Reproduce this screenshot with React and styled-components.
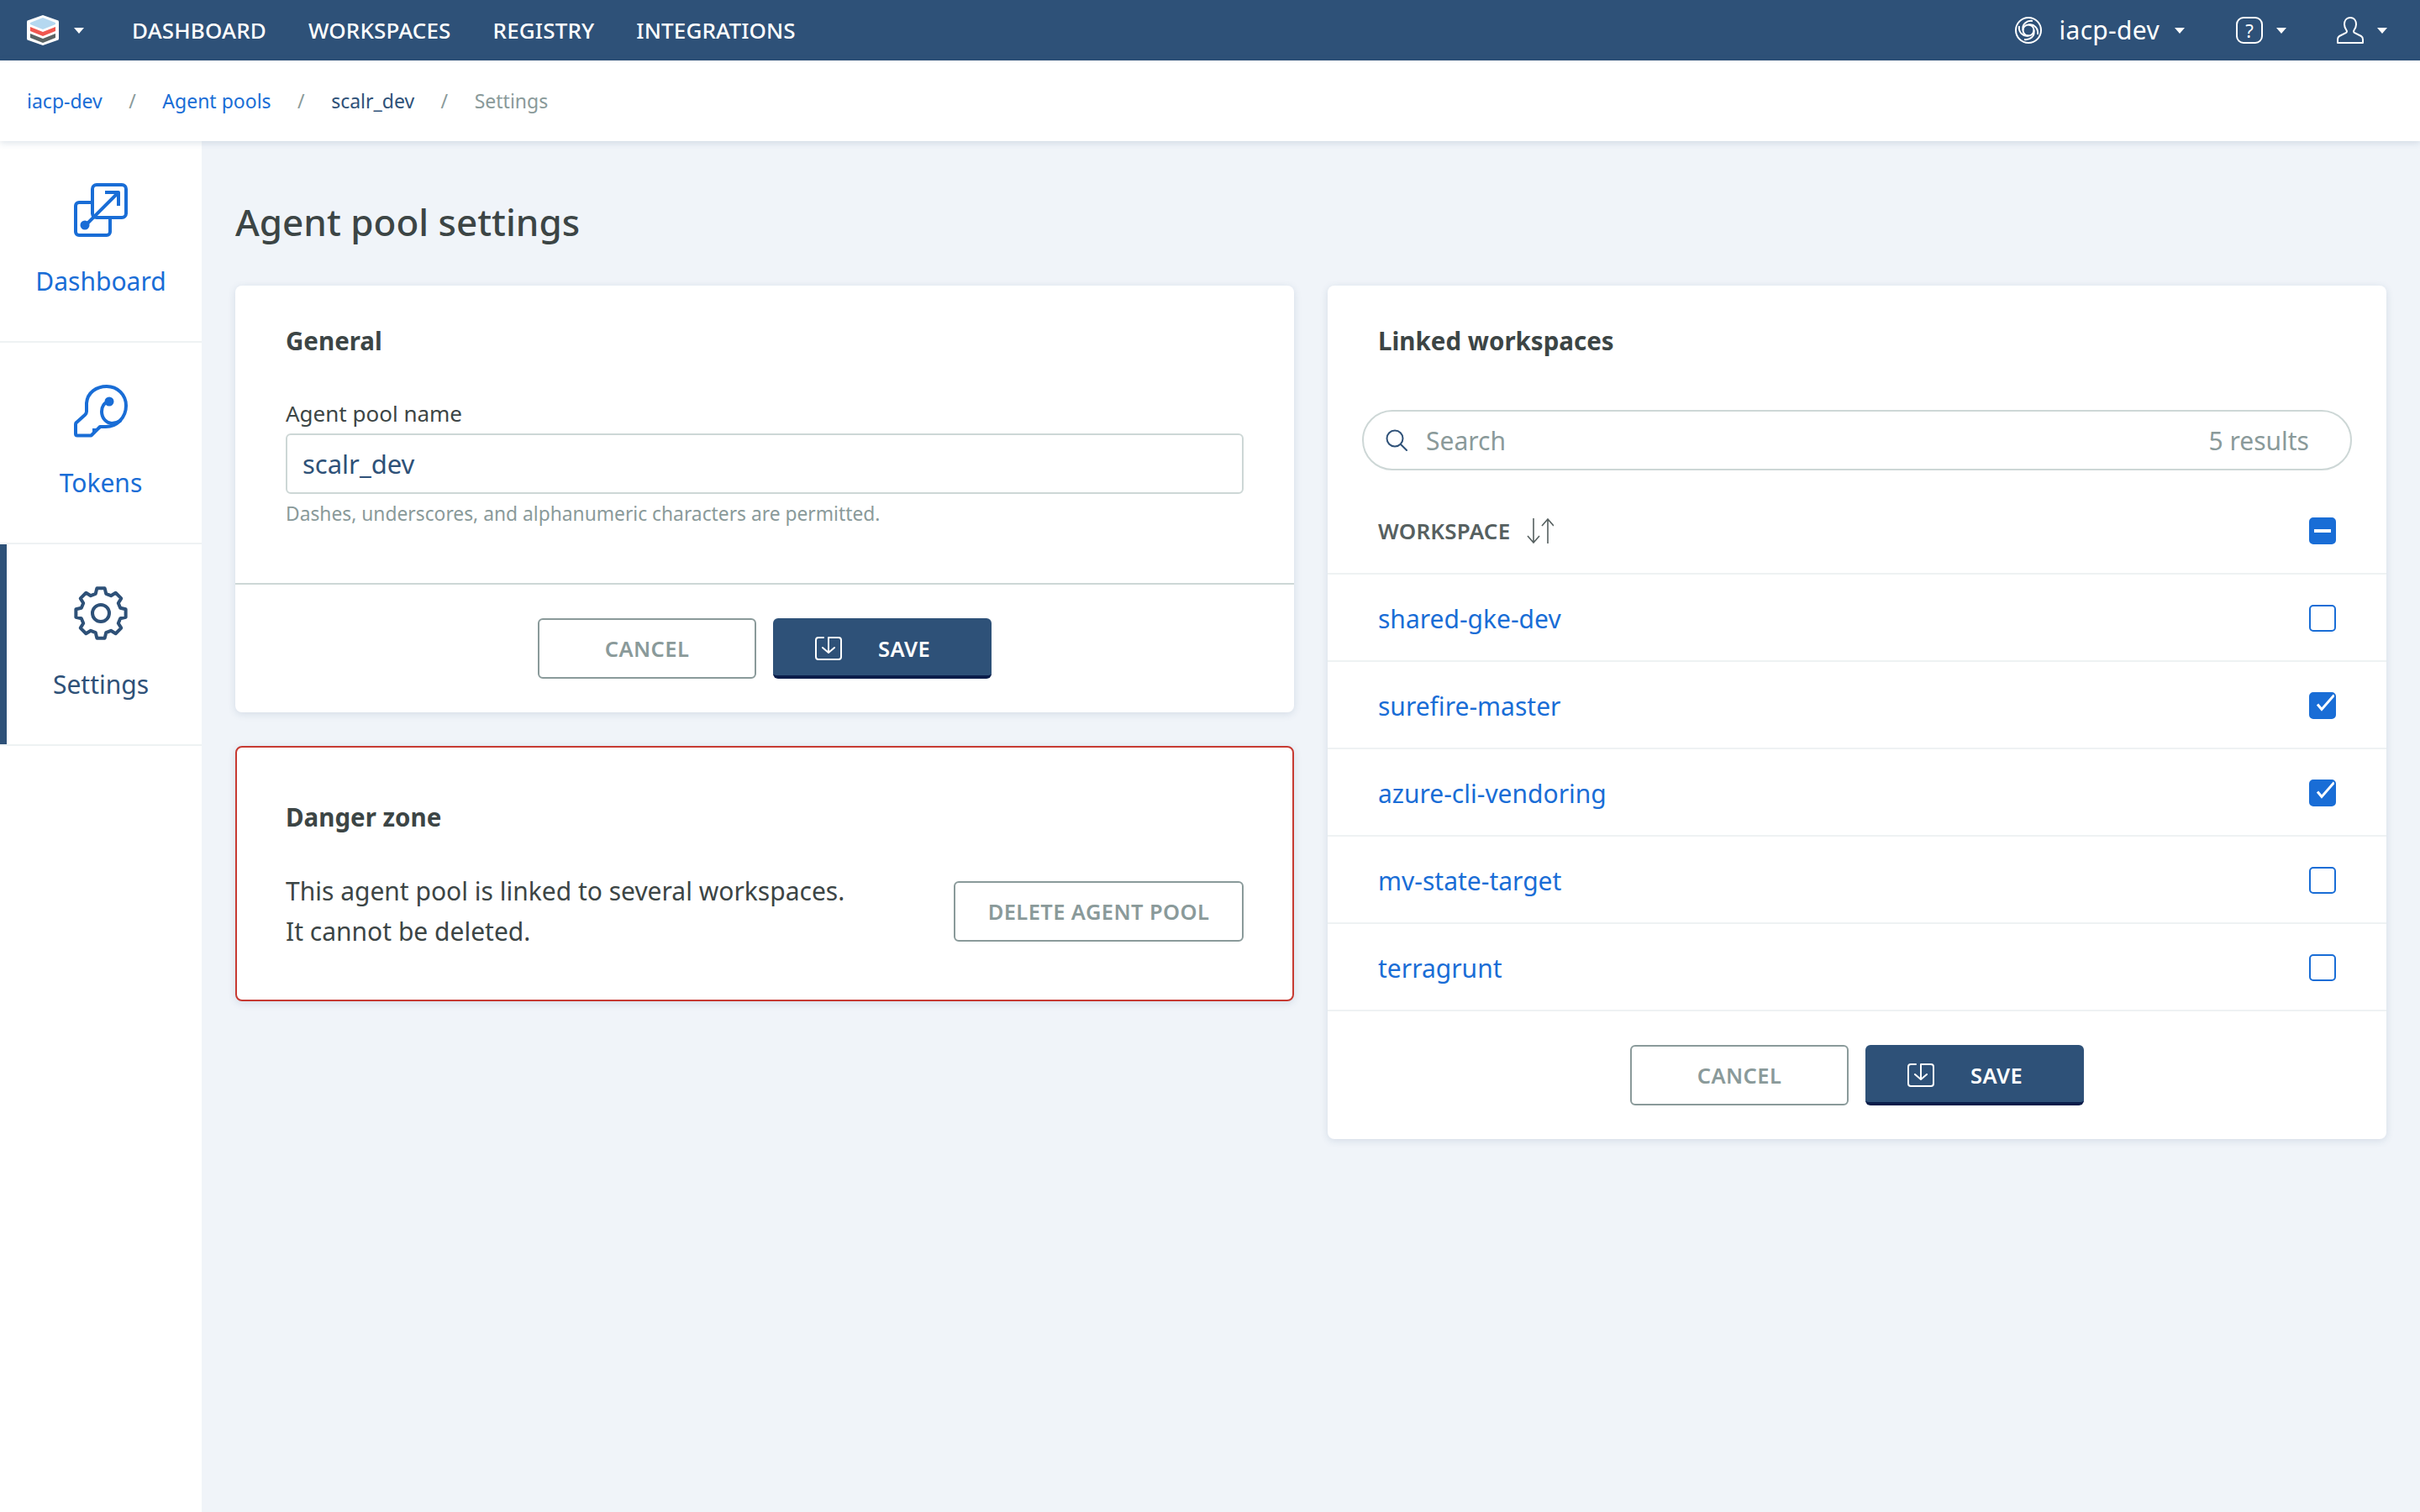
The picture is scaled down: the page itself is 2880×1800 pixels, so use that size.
import React from "react";
import styled, { createGlobalStyle } from "styled-components";

const navy = "#2e5178";
const blue = "#196dd6";
const fontStack = `"Noto Sans", "Open Sans", sans-serif`;

const GlobalStyle = createGlobalStyle`
    html, body {
        margin: 0;
        padding: 0;
        background: #f0f4f9;
    }
    * {
        box-sizing: border-box;
    }
`;

const Page = styled.div`
    width: 2880px;
    height: 1800px;
    overflow: hidden;
    display: flex;
    flex-direction: column;
    background: #f0f4f9;
    font-family: ${fontStack};
    color: #3c4545;
`;

const TopBar = styled.header`
    height: 72px;
    flex: none;
    display: flex;
    align-items: center;
    padding: 0 39px 0 32px;
    background: ${navy};
    color: #fff;
`;

const Caret = styled.span`
    display: inline-block;
    flex: none;
    width: 0;
    height: 0;
    margin-left: ${(props) => props.$gap || 18}px;
    border-left: 6px solid transparent;
    border-right: 6px solid transparent;
    border-top: 7px solid #fff;
`;

const Nav = styled.nav`
    display: flex;
    gap: 50px;
    margin-left: 57px;
`;

const NavLink = styled.a`
    font-size: 26px;
    font-weight: 500;
    letter-spacing: 0.15px;
    line-height: 72px;
`;

const TopRight = styled.div`
    margin-left: auto;
    display: flex;
    align-items: center;
`;

const OrgName = styled.span`
    margin-left: 21px;
    font-size: 30px;
    letter-spacing: 0.3px;
    line-height: 72px;
`;

const TopItem = styled.div`
    display: flex;
    align-items: center;
    margin-left: ${(props) => props.$gap || 0}px;
`;

const HelpBox = styled.span`
    width: 32px;
    height: 32px;
    border: 2px solid #fff;
    border-radius: 9px;
    display: flex;
    align-items: center;
    justify-content: center;
    font-size: 22px;
    line-height: 1;
`;

const Crumbs = styled.div`
    height: 96px;
    flex: none;
    display: flex;
    align-items: center;
    padding-left: 32px;
    background: #fff;
    box-shadow: 0 2px 8px rgba(46, 81, 120, 0.16);
    position: relative;
    z-index: 2;
    font-size: 23px;
`;

const Crumb = styled.span`
    color: ${(props) => props.$color};
`;

const CrumbSlash = styled.span`
    color: #8a9a9a;
    margin: 0 31.5px;
`;

const Body = styled.div`
    flex: 1;
    display: flex;
    min-height: 0;
`;

const Sidebar = styled.aside`
    width: 240px;
    flex: none;
    background: #fff;
`;

const SideItem = styled.a`
    height: 240px;
    display: flex;
    flex-direction: column;
    align-items: center;
    padding-top: 50px;
    border-bottom: 2px solid #eef2f3;
    color: ${(props) => (props.$active ? navy : blue)};
    box-shadow: ${(props) => (props.$active ? `inset 8px 0 0 ${navy}` : "none")};

    svg {
        width: 64px;
        height: 64px;
        display: block;
    }
`;

const SideLabel = styled.span`
    margin-top: 31px;
    font-size: 30px;
    line-height: 44px;
`;

const Main = styled.main`
    flex: 1;
    padding: 60px 40px 0;
`;

const Title = styled.h1`
    margin: 0 0 40px;
    font-size: 44px;
    font-weight: 500;
    line-height: 72px;
`;

const Columns = styled.div`
    display: grid;
    grid-template-columns: 1260px 1260px;
    gap: 40px;
    align-items: start;
`;

const Stack = styled.div`
    display: flex;
    flex-direction: column;
    gap: 40px;
`;

const Card = styled.section`
    background: #fff;
    border-radius: 8px;
    box-shadow: 0 2px 10px rgba(46, 81, 120, 0.14);
`;

const DangerCard = styled(Card)`
    border: 2px solid #c73a32;
    padding: 59px 58px 57px;
`;

const CardHead = styled.h2`
    margin: 0;
    font-size: 29.5px;
    font-weight: 700;
    line-height: 48px;
`;

const GeneralBody = styled.div`
    padding: 42px 60px 66px;
`;

const FieldLabel = styled.label`
    display: block;
    margin-top: 42px;
    margin-bottom: 4px;
    font-size: 26px;
    line-height: 40px;
`;

const FieldBox = styled.div`
    height: 72px;
    display: flex;
    align-items: center;
    padding: 0 18px;
    border: 2px solid #cdd7d6;
    border-radius: 6px;
    font-size: 31px;
    color: ${navy};
`;

const FieldHint = styled.p`
    margin: 8px 0 0;
    font-size: 22.8px;
    line-height: 32px;
    color: #8a9a9a;
`;

const Footer = styled.div`
    display: flex;
    justify-content: center;
    gap: 20px;
    padding: 40px 0;
    border-top: ${(props) => (props.$line ? "2px solid #cdd7d6" : "none")};
`;

const Button = styled.button`
    height: 72px;
    width: ${(props) => props.$width || 260}px;
    flex: none;
    display: flex;
    align-items: center;
    justify-content: center;
    padding: 0;
    background: #fff;
    border: 2px solid #8a9a9a;
    border-radius: 6px;
    font-family: ${fontStack};
    font-size: 25.5px;
    font-weight: 600;
    letter-spacing: 0.4px;
    color: #8a9a9a;
`;

const SaveButton = styled(Button)`
    justify-content: flex-start;
    padding: 4px 0 0 50px;
    background: ${navy};
    border: none;
    border-bottom: 4px solid #0a1d4a;
    color: #fff;

    svg {
        width: 32px;
        height: 28px;
        margin-right: 43px;
    }
`;

const DangerRow = styled.div`
    display: flex;
    align-items: center;
    justify-content: space-between;
    margin-top: 40px;
`;

const DangerText = styled.p`
    margin: 0;
    font-size: 30px;
    line-height: 48px;
`;

const LinkedHead = styled(CardHead)`
    padding: 42px 60px 0;
`;

const SearchBox = styled.div`
    height: 72px;
    margin: 58px 41px 0;
    display: flex;
    align-items: center;
    padding: 0 49px 0 26px;
    border: 2px solid #cdd7d6;
    border-radius: 36px;
    font-size: 30px;
    color: #8a9a9a;

    svg {
        width: 26px;
        height: 26px;
        margin-right: 22px;
    }
`;

const Results = styled.span`
    margin-left: auto;
`;

const Row = styled.div`
    height: 104px;
    display: flex;
    align-items: center;
    justify-content: space-between;
    padding: 2px 60px 0;
    border-bottom: 2px solid #eef2f3;
`;

const HeadRow = styled(Row)`
    height: 124px;
    padding-top: 22px;
`;

const HeadLabel = styled.span`
    display: flex;
    align-items: center;
    font-size: 26px;
    font-weight: 600;
    letter-spacing: 0.2px;
    color: #566060;

    svg {
        width: 32px;
        height: 30px;
        margin-left: 20px;
    }
`;

const WorkspaceLink = styled.a`
    font-size: 30px;
    color: ${blue};
`;

const Check = styled.span`
    width: 32px;
    height: 32px;
    flex: none;
    display: flex;
    align-items: center;
    justify-content: center;
    border-radius: 5px;
    border: 2px solid ${blue};
    background: ${(props) => (props.$on ? blue : "#fff")};
    overflow: hidden;

    svg {
        width: 32px;
        height: 32px;
        flex: none;
    }
`;

const Logo = () => (
    <svg width="38" height="36" viewBox="0 0 38 36">
        <path d="M19 0 36 6a2 2 0 0 1 2 2v20a2 2 0 0 1-2 2L19 36 2 30a2 2 0 0 1-2-2V8a2 2 0 0 1 2-2z" fill="#fff" />
        <path d="M19 3 34 9v2L19 17 4 11V9z" fill="#b5d8f0" />
        <path d="M4 14 19 20 34 14v5L19 25 4 19z" fill="#f0574f" />
        <path d="M4 22 19 28 34 22v5L19 33 4 27z" fill="#5a6464" />
    </svg>
);

const OrgIcon = () => (
    <svg width="32" height="32" viewBox="0 0 32 32" fill="none" stroke="#fff" strokeWidth="2">
        <circle cx="16" cy="16" r="15" />
        <circle cx="16" cy="16" r="6.5" />
        <path d="M9.5 16C8 9 14 4 21 5M16 9.5C23 8 28 14 27 21M22.5 16C24 23 18 28 11 27M16 22.5C9 24 4 18 5 11" />
    </svg>
);

const UserIcon = () => (
    <svg width="32" height="32" viewBox="0 0 32 32" fill="none" stroke="#fff" strokeWidth="2" strokeLinejoin="round">
        <path d="M16 1C11 1 9 5 9 9c0 3 1 5 2.500 7 .8 1.200.5 2.500-.8 3.200L3 23c-1.500.8-2 2-2 4v4h30v-4c0-2-.5-3.200-2-4l-7.700-3.800c-1.300-.7-1.600-2-.8-3.200C22 14 23 12 23 9c0-4-2-8-7-8z" />
    </svg>
);

const DashboardIcon = () => (
    <svg viewBox="0 0 64 64" fill="none" stroke="currentColor" strokeWidth="4" strokeLinejoin="round">
        <path d="M20 23H6a4 4 0 0 0-4 4v31a4 4 0 0 0 4 4h33a4 4 0 0 0 4-4V43" />
        <rect x="22" y="2" width="40" height="39" rx="5" />
        <path d="M14 50 51 13M37 11h16v16" />
        <circle cx="13" cy="50" r="5.500" fill="currentColor" stroke="none" />
    </svg>
);

const TokenIcon = () => (
    <svg viewBox="0 0 64 64" fill="none" stroke="currentColor" strokeWidth="4" strokeLinejoin="round" strokeLinecap="round">
        <path d="M15 22C16 9 27 2 39 2c13 0 23 10 23 23 0 14-11 25-24 25h-7L21 60a2 2 0 0 1-1 .5H4a2 2 0 0 1-2-2V47c0-1 .3-1.500 1-2l10-9c1-1 2-2 2-4z" />
        <path d="M42 20c-6 1-9 6-9 12 0 8 6 14 12 14 4 0 7-1 10-3" />
        <circle cx="42" cy="20" r="5.500" fill="currentColor" stroke="none" />
        <path d="M22 60V52h10L21 60z" fill="currentColor" stroke="none" />
    </svg>
);

// eight flat teeth round a circle
const gearPath = () => {
    const point = (radius, angle) => {
        const rad = (angle * Math.PI) / 180;
        return `${(32 + radius * Math.cos(rad)).toFixed(2)} ${(32 + radius * Math.sin(rad)).toFixed(2)}`;
    };
    let d = "";
    for (let i = 0; i < 8; i++) {
        const a = i * 45 - 90;
        d += `${i === 0 ? "M" : "L"}${point(24, a - 15)} L${point(30, a - 9)} L${point(30, a + 9)} L${point(24, a + 15)} `;
    }
    return d + "Z";
};

const GearIcon = () => (
    <svg viewBox="0 0 64 64" fill="none" stroke="currentColor" strokeWidth="4" strokeLinejoin="round">
        <path d={gearPath()} />
        <circle cx="32" cy="32" r="10" />
    </svg>
);

const SaveIcon = () => (
    <svg viewBox="0 0 32 28" fill="none" stroke="#fff" strokeWidth="2" strokeLinecap="round" strokeLinejoin="round">
        <path d="M10 1H4a3 3 0 0 0-3 3v20a3 3 0 0 0 3 3h24a3 3 0 0 0 3-3V4a3 3 0 0 0-3-3H16v16M9 13l7 6 7-6" />
    </svg>
);

const SearchIcon = () => (
    <svg viewBox="0 0 26 26" fill="none" stroke={navy} strokeWidth="2" strokeLinecap="round">
        <circle cx="11" cy="11" r="9.500" />
        <path d="M18 18l7 7" />
    </svg>
);

const SortIcon = () => (
    <svg viewBox="0 0 32 30" fill="none" stroke="#566060" strokeWidth="1.600">
        <path d="M8 0v28M1 21l7 8 7-8M25 30V2M18 9l7-8 7 8" />
    </svg>
);

const CheckMark = () => (
    <svg viewBox="0 0 32 32" fill="none" stroke="#fff" strokeWidth="3">
        <path d="M10 14.500l5 6L32 1" />
    </svg>
);

const DashMark = () => (
    <svg viewBox="0 0 32 32" fill="#fff">
        <rect x="6" y="14" width="20" height="4" />
    </svg>
);

const workspaces = [
    { name: "shared-gke-dev", on: false },
    { name: "surefire-master", on: true },
    { name: "azure-cli-vendoring", on: true },
    { name: "mv-state-target", on: false },
    { name: "terragrunt", on: false },
];

const FormFooter = (props) => (
    <Footer $line={props.line}>
        <Button>CANCEL</Button>
        <SaveButton>
            <SaveIcon />
            SAVE
        </SaveButton>
    </Footer>
);

const App = () => {
    return (
        <Page>
            <GlobalStyle />
            <TopBar>
                <Logo />
                <Caret />
                <Nav>
                    <NavLink>DASHBOARD</NavLink>
                    <NavLink>WORKSPACES</NavLink>
                    <NavLink>REGISTRY</NavLink>
                    <NavLink>INTEGRATIONS</NavLink>
                </Nav>
                <TopRight>
                    <TopItem>
                        <OrgIcon />
                        <OrgName>iacp-dev</OrgName>
                        <Caret />
                    </TopItem>
                    <TopItem $gap={61}>
                        <HelpBox>?</HelpBox>
                        <Caret $gap={16} />
                    </TopItem>
                    <TopItem $gap={60}>
                        <UserIcon />
                        <Caret $gap={16} />
                    </TopItem>
                </TopRight>
            </TopBar>
            <Crumbs>
                <Crumb $color={blue}>iacp-dev</Crumb>
                <CrumbSlash>/</CrumbSlash>
                <Crumb $color={blue}>Agent pools</Crumb>
                <CrumbSlash>/</CrumbSlash>
                <Crumb $color={navy}>scalr_dev</Crumb>
                <CrumbSlash>/</CrumbSlash>
                <Crumb $color="#8a9a9a">Settings</Crumb>
            </Crumbs>
            <Body>
                <Sidebar>
                    <SideItem>
                        <DashboardIcon />
                        <SideLabel>Dashboard</SideLabel>
                    </SideItem>
                    <SideItem>
                        <TokenIcon />
                        <SideLabel>Tokens</SideLabel>
                    </SideItem>
                    <SideItem $active>
                        <GearIcon />
                        <SideLabel>Settings</SideLabel>
                    </SideItem>
                </Sidebar>
                <Main>
                    <Title>Agent pool settings</Title>
                    <Columns>
                        <Stack>
                            <Card>
                                <GeneralBody>
                                    <CardHead>General</CardHead>
                                    <FieldLabel>Agent pool name</FieldLabel>
                                    <FieldBox>scalr_dev</FieldBox>
                                    <FieldHint>
                                        Dashes, underscores, and alphanumeric characters are permitted.
                                    </FieldHint>
                                </GeneralBody>
                                <FormFooter line />
                            </Card>
                            <DangerCard>
                                <CardHead>Danger zone</CardHead>
                                <DangerRow>
                                    <DangerText>
                                        This agent pool is linked to several workspaces.
                                        <br />
                                        It cannot be deleted.
                                    </DangerText>
                                    <Button $width={345}>DELETE AGENT POOL</Button>
                                </DangerRow>
                            </DangerCard>
                        </Stack>
                        <Card>
                            <LinkedHead>Linked workspaces</LinkedHead>
                            <SearchBox>
                                <SearchIcon />
                                Search
                                <Results>5 results</Results>
                            </SearchBox>
                            <HeadRow>
                                <HeadLabel>
                                    WORKSPACE
                                    <SortIcon />
                                </HeadLabel>
                                <Check $on>
                                    <DashMark />
                                </Check>
                            </HeadRow>
                            {workspaces.map((item) => (
                                <Row key={item.name}>
                                    <WorkspaceLink>{item.name}</WorkspaceLink>
                                    <Check $on={item.on}>{item.on && <CheckMark />}</Check>
                                </Row>
                            ))}
                            <FormFooter />
                        </Card>
                    </Columns>
                </Main>
            </Body>
        </Page>
    );
};

export default App;
